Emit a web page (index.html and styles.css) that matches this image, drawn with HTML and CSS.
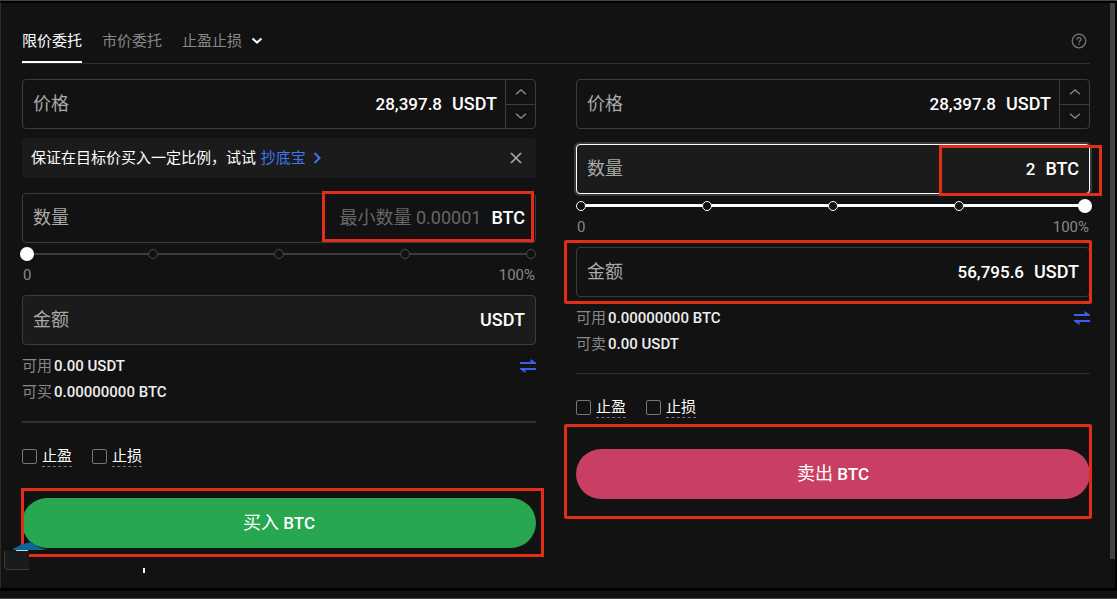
FILE: index.html
```
<!DOCTYPE html>
<html lang="zh-CN">
<head>
<meta charset="utf-8">
<meta name="viewport" content="width=device-width, initial-scale=1">
<title>BTC / USDT 限价委托</title>
<link rel="stylesheet" href="styles.css">
</head>
<body>
<div class="window">
  <div class="body">
    <main class="panel">
      <nav class="tabs">
        <button class="tab tab-active" type="button">限价委托</button>
        <button class="tab" type="button">市价委托</button>
        <button class="tab" type="button">止盈止损
          <svg class="caret" viewBox="0 0 12 8" width="12" height="8"><path d="M1.5 1.5 6 5.6l4.500-4.100" fill="none" stroke="#fff" stroke-width="2"/></svg>
        </button>
        <button class="help" type="button" aria-label="帮助">
          <svg viewBox="0 0 16 16" width="16" height="16" fill="none" stroke="#777" stroke-width="1.300"><circle cx="8" cy="8" r="6.800"/><path d="M6 6.600C6 5.300 6.900 4.600 8 4.600s2 .7 2 1.800c0 1.400-2 1.500-2 3"/><path d="M8 10.600v1.300"/></svg>
        </button>
      </nav>

      <div class="columns">
        <form class="side">
          <div class="field">
            <label for="buy-price">价格</label>
            <input id="buy-price" type="text" value="28,397.8">
            <span class="unit">USDT</span>
            <div class="stepper">
              <button type="button" aria-label="增加"><svg viewBox="0 0 12 8" width="12" height="8"><path d="M1 6.200 6 2l5 4.200"/></svg></button>
              <button type="button" aria-label="减少"><svg viewBox="0 0 12 8" width="12" height="8"><path d="M1 1.800 6 6l5-4.200"/></svg></button>
            </div>
          </div>
          <div class="notice">
            <span>保证在目标价买入一定比例，试试 <a href="#">抄底宝</a></span>
            <svg class="more" viewBox="0 0 8 12" width="8" height="12"><path d="M1.500 1 6.500 6l-5 5" fill="none" stroke="#3f75f0" stroke-width="2"/></svg>
            <button class="close" type="button" aria-label="关闭"><svg viewBox="0 0 12 12" width="12" height="12"><path d="M1 1l10 10M11 1 1 11" stroke="#aaa" stroke-width="1.700"/></svg></button>
          </div>
          <div class="field amount-field">
            <label for="buy-qty">数量</label>
            <input id="buy-qty" type="text" placeholder="最小数量 0.00001">
            <span class="unit">BTC</span>
            <div class="mark mark-buy-qty"></div>
          </div>
          <div class="slider">
            <div class="stops"><i></i><i></i><i></i><i></i><i></i></div>
            <input type="range" min="0" max="100" value="0" aria-label="买入比例">
          </div>
          <div class="scale"><span>0</span><span>100%</span></div>
          <div class="field filled">
            <label for="buy-total">金额</label>
            <input id="buy-total" type="text">
            <span class="unit">USDT</span>
          </div>
          <div class="balance"><span class="name">可用</span><span>0.00 USDT</span>
            <svg class="swap" viewBox="0 0 16 14" width="16" height="14"><path d="M0 5h16V3.800L10.500 0v3H0zM16 9H0v1.200L5.500 14v-3H16z" fill="#3f5cf0"/></svg>
          </div>
          <div class="balance"><span class="name">可买</span><span>0.00000000 BTC</span></div>
          <hr class="rule rule-thick">
          <div class="options">
            <label><input type="checkbox"><span>止盈</span></label>
            <label><input type="checkbox"><span>止损</span></label>
          </div>
          <div class="action">
            <button class="submit buy" type="button">买入 <b>BTC</b></button>
            <div class="mark mark-buy"></div>
            <svg class="badge" viewBox="0 0 36 10" width="36" height="10"><path d="M0 7C8 2 14 1 19 0c3 3 7 6 15 8H0z" fill="#0b6699"/><path d="M3 8.500h12" stroke="#ccc"/></svg>
            <div class="tile"></div>
            <div class="tick"></div>
          </div>
        </form>

        <form class="side">
          <div class="field">
            <label for="sell-price">价格</label>
            <input id="sell-price" type="text" value="28,397.8">
            <span class="unit">USDT</span>
            <div class="stepper">
              <button type="button" aria-label="增加"><svg viewBox="0 0 12 8" width="12" height="8"><path d="M1 6.200 6 2l5 4.200"/></svg></button>
              <button type="button" aria-label="减少"><svg viewBox="0 0 12 8" width="12" height="8"><path d="M1 1.800 6 6l5-4.200"/></svg></button>
            </div>
          </div>
          <div class="field amount-field filled focused">
            <label for="sell-qty">数量</label>
            <input id="sell-qty" type="text" value="2">
            <span class="unit">BTC</span>
            <div class="mark mark-sell-qty"></div>
          </div>
          <div class="slider slider-full">
            <div class="stops"><i></i><i></i><i></i><i></i><i></i></div>
            <input type="range" min="0" max="100" value="100" aria-label="卖出比例">
          </div>
          <div class="scale"><span>0</span><span>100%</span></div>
          <div class="field">
            <label for="sell-total">金额</label>
            <input id="sell-total" type="text" value="56,795.6">
            <span class="unit">USDT</span>
            <div class="mark mark-sell-total"></div>
          </div>
          <div class="balance"><span class="name">可用</span><span>0.00000000 BTC</span>
            <svg class="swap" viewBox="0 0 16 14" width="16" height="14"><path d="M0 5h16V3.800L10.500 0v3H0zM16 9H0v1.200L5.500 14v-3H16z" fill="#3f5cf0"/></svg>
          </div>
          <div class="balance"><span class="name">可卖</span><span>0.00 USDT</span></div>
          <hr class="rule">
          <div class="options">
            <label><input type="checkbox"><span>止盈</span></label>
            <label><input type="checkbox"><span>止损</span></label>
          </div>
          <div class="action">
            <button class="submit sell" type="button">卖出 <b>BTC</b></button>
            <div class="mark mark-sell"></div>
          </div>
        </form>
      </div>
    </main>
    <div class="scrollbar"></div>
  </div>
  <div class="footer"></div>
</div>
</body>
</html>
```
FILE: styles.css
```
* { box-sizing: border-box; }

body {
  margin: 0;
  background: #121212;
  color: #fff;
  font: 15px/20px Roboto, "Noto Sans CJK SC", sans-serif;
}

button, input { font: inherit; color: inherit; }
button { padding: 0; border: 0; background: none; cursor: pointer; }
svg { display: block; }

.window {
  display: flex;
  flex-direction: column;
  min-height: 100vh;
  border-top: 1px solid #444;
}

.body {
  flex: 1;
  display: flex;
  border-top: 2px solid #000;
  border-right: 2px solid #000;
  border-left: 1px solid #2c2c2c;
}

.panel { flex: 1; min-width: 0; padding: 17px 20px 0 21px; }

.scrollbar { width: 5px; margin-bottom: 29px; background: #434343; }

.footer { height: 11px; border-top: 3px solid #000; border-bottom: 1px solid #444; }

/* Order type tabs */
.tabs {
  display: flex;
  align-items: stretch;
  gap: 20px;
  height: 44px;
  border-bottom: 1px solid #303030;
}

.tab, .help { display: flex; align-items: center; gap: 9px; color: #888; border-bottom: 2px solid transparent; }
.tab-active { color: #fff; border-color: #fff; }
.help { margin-left: auto; padding-right: 3px; }

.columns { display: grid; grid-template-columns: 1fr 1fr; gap: 40px; padding-top: 15px; }

.side { min-width: 0; }

/* Input boxes */
.field {
  position: relative;
  display: flex;
  align-items: center;
  height: 50px;
  padding: 0 10px;
  border: 1px solid #3c3c3c;
  border-radius: 4px;
  font-size: 18px;
  line-height: 24px;
}

.field label { color: #aaa; }
.field input {
  flex: 1;
  min-width: 0;
  padding: 0;
  border: 0;
  outline: 0;
  background: none;
  text-align: right;
  font-size: 17px;
  font-weight: 500;
}
.field input::placeholder { color: #666; font-size: 18px; font-weight: 400; opacity: 1; }
.unit { margin-left: 10px; font-weight: 500; }
.filled { background: #1b1b1b; }
.focused { border-color: #fff; box-shadow: 0 0 0 2px #3a3a3a; }
.amount-field { margin-top: 15px; }

.stepper {
  display: flex;
  flex-direction: column;
  align-self: stretch;
  width: 30px;
  margin: 0 -10px 0 8px;
  border-left: 1px solid #3c3c3c;
}
.stepper button { flex: 1; display: grid; place-items: center; }
.stepper button + button { border-top: 1px solid #3c3c3c; }
.stepper path { fill: none; stroke: #888; stroke-width: 1.5; }

.notice {
  display: flex;
  align-items: center;
  height: 40px;
  margin-top: 9px;
  padding: 0 14px 0 9px;
  border-radius: 4px;
  background: #1b1b1b;
}
.notice a { margin-left: 1px; color: #3f75f0; text-decoration: none; }
.more { margin-left: 7px; }
.close { margin-left: auto; }

/* Percentage slider */
.slider { position: relative; height: 14px; margin-top: 4px; }
.slider::before {
  content: "";
  position: absolute;
  inset: 6px 5px;
  background: #3c3c3c;
}
.slider-full { margin-top: 5px; }
.slider-full::before { top: 5px; background: #fff; }
.stops { position: absolute; inset: 2px 0; display: flex; justify-content: space-between; }
.stops i { width: 10px; height: 10px; border: 1px solid #4a4a4a; border-radius: 50%; background: #121212; }
.slider-full .stops i { border-color: #fff; }
.slider input {
  position: absolute;
  left: -2px;
  top: 0;
  width: calc(100% + 4px);
  height: 14px;
  margin: 0;
  appearance: none;
  background: none;
}
.slider input::-webkit-slider-thumb { appearance: none; width: 14px; height: 14px; border-radius: 50%; background: #fff; }

.scale { display: flex; justify-content: space-between; margin: 4px 0 10px; padding: 0 1px; color: #888; }

.balance { display: flex; align-items: center; gap: 2px; margin-top: 6px; font-weight: 500; color: #eee; }
.field + .balance { margin-top: 11px; }
.name { color: #888; font-weight: 400; }
.swap { margin-left: auto; }

.rule { height: 1px; margin: 19px 0 23px; border: 0; background: #303030; }
.rule-thick { height: 2px; }

.options { display: flex; gap: 20px; }
.options label { display: flex; align-items: center; gap: 5px; }
.options input {
  appearance: none;
  width: 15px;
  height: 15px;
  margin: 0;
  border: 1px solid #777;
  border-radius: 2px;
}
.options span { border-bottom: 1px dashed #777; }

/* Submit buttons */
.action { position: relative; margin-top: 31px; }
.submit { display: block; width: 100%; height: 50px; border-radius: 25px; font-size: 18px; }
.submit b { font-size: 17px; font-weight: 500; }
.buy { background: #27a74f; }
.sell { background: #c93f63; }

/* Red callout frames over the form */
.mark { position: absolute; border: 3px solid #e22d18; pointer-events: none; }
.mark-buy-qty { top: -3px; right: 1px; bottom: 0; width: 212px; }
.mark-sell-qty { top: 0; right: -13px; bottom: -3px; width: 163px; }
.mark-sell-total { inset: -8px -3px -8px -13px; border-radius: 2px; }
.mark-buy { inset: -10px -8px -9px -1px; }
.mark-sell { inset: -25px -2px -20px -12px; border-radius: 2px; }

.badge { position: absolute; left: -9px; bottom: -4px; }
.tile {
  position: absolute;
  left: -18px;
  bottom: -22px;
  width: 25px;
  height: 19px;
  border: solid #3c3c3c;
  border-width: 0 0 1px 1px;
  border-radius: 0 0 0 4px;
  background: #1b1b1b;
}
.tick { position: absolute; left: 121px; bottom: -25px; width: 2px; height: 5px; background: #fff; }
```
